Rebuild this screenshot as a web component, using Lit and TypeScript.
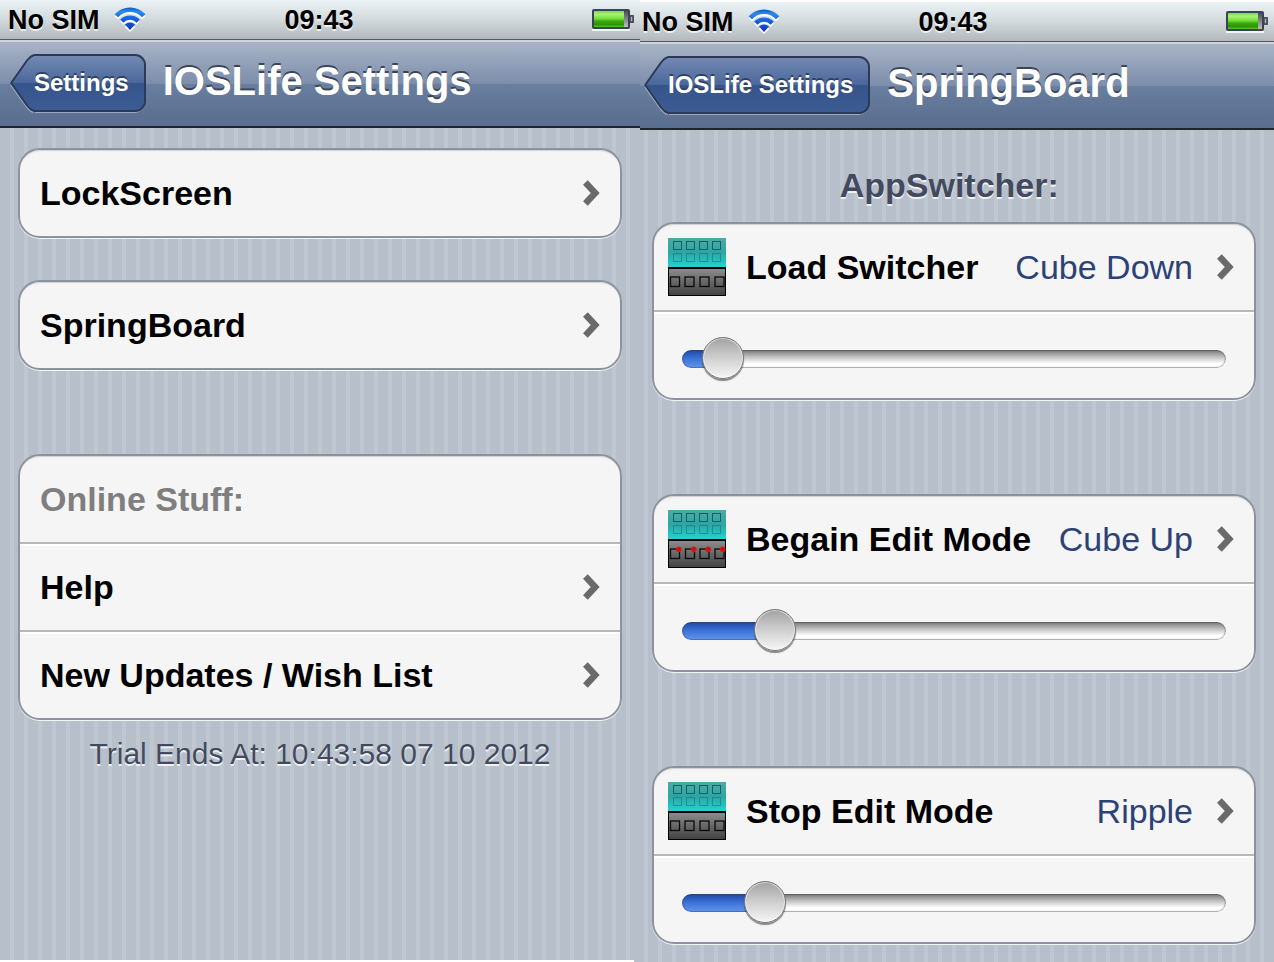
import { LitElement, html, css, svg, nothing } from "lit";
import { customElement, property, state } from "lit/decorators.js";

const chevron = html`<svg class="chevron" width="17" height="26" viewBox="0 0 17 26" aria-hidden="true">
  <path d="M2.400 2.600 L12.200 13 L2.400 23.400" fill="none" stroke="#6a6a6a" stroke-width="6.500" />
</svg>`;

@customElement("status-bar")
export class StatusBar extends LitElement {
  static styles = css`
    :host {
      display: grid;
      grid-template-columns: 1fr auto 1fr;
      align-items: center;
      height: 40px;
      box-sizing: border-box;
      padding: 0 6px 0 8px;
      border-bottom: 1px solid #555b60;
      background: linear-gradient(#ecf3f5, #d3dadd 50%, #b1b9bc);
      font-size: 27px;
      font-weight: bold;
      line-height: 38px;
      color: #000;
      text-shadow: 0 2px 0 rgba(255, 255, 255, 0.7);
    }
    .carrier {
      display: flex;
      align-items: center;
      gap: 14px;
    }
    .clock {
      padding-right: 4px;
    }
    .battery {
      justify-self: end;
    }
    svg {
      display: block;
    }
  `;

  render() {
    const arcs = svg`<path d="M2.300 8.800 A18.500 18.500 0 0 1 29.700 8.800" fill="none" stroke-width="4.600" />
      <path d="M7.800 14.100 A11.500 11.500 0 0 1 24.200 14.100" fill="none" stroke-width="4.400" />`;
    return html`
      <span class="carrier">
        No SIM
        <svg width="32" height="25" viewBox="0 0 32 25" role="img" aria-label="Wi-Fi">
          <defs>
            <linearGradient id="wave" x1="0" y1="0" x2="0" y2="24" gradientUnits="userSpaceOnUse">
              <stop offset="0" stop-color="#0f55bc" />
              <stop offset="0.2" stop-color="#2b8bf0" />
              <stop offset="0.45" stop-color="#1766e2" />
              <stop offset="1" stop-color="#0a2fb8" />
            </linearGradient>
          </defs>
          <g stroke="#fff" fill="#fff" transform="translate(0 2)">
            ${arcs}
            <path d="M10.800 18 Q16 13.500 21.200 18 L16 23 Z" stroke="none" />
          </g>
          <g stroke="url(#wave)">
            ${arcs}
            <path d="M11 17.600 Q16 13.200 21 17.600 L16 23 Z" fill="url(#wave)" stroke="none" />
          </g>
        </svg>
      </span>
      <time class="clock">09:43</time>
      <svg class="battery" width="42" height="22" viewBox="0 0 42 22" role="img" aria-label="Battery">
        <defs>
          <linearGradient id="charge" x1="0" y1="0" x2="0" y2="1">
            <stop offset="0" stop-color="#7ed44c" />
            <stop offset="0.2" stop-color="#a8f574" />
            <stop offset="0.48" stop-color="#74dc3a" />
            <stop offset="0.65" stop-color="#37a80e" />
            <stop offset="0.85" stop-color="#2b9405" />
            <stop offset="1" stop-color="#59c52c" />
          </linearGradient>
          <linearGradient id="empty" x1="0" y1="0" x2="0" y2="1">
            <stop offset="0" stop-color="#43454d" />
            <stop offset="1" stop-color="#c3c6ca" />
          </linearGradient>
        </defs>
        <rect x="0" y="20" width="38" height="2" fill="#fff" opacity="0.8" />
        <rect x="1" y="1" width="36" height="18" rx="1" fill="url(#empty)" stroke="#3c4350" stroke-width="2" />
        <rect x="2" y="2" width="30" height="16" fill="url(#charge)" />
        <rect x="37.900" y="6.900" width="3.200" height="6.200" fill="#aeb3ba" stroke="#3c4350" stroke-width="1.600" />
      </svg>
    `;
  }
}

@customElement("nav-bar")
export class NavBar extends LitElement {
  @property() back = "";
  @property() heading = "";

  static styles = css`
    :host {
      display: flex;
      align-items: center;
      gap: 17px;
      height: 88px;
      box-sizing: border-box;
      padding: 0 10px 2px;
      border-top: 2px solid #ced4dc;
      border-bottom: 2px solid #20242c;
      background: linear-gradient(#a9b4c6, #7c8dab 50%, #697f9f 50%, #596d8f);
      color: #fff;
    }
    .back {
      display: flex;
      padding: 0;
      border: 0;
      background: none;
      font: bold 24px/54px "Liberation Sans", Arial, sans-serif;
      color: inherit;
      text-shadow: 0 -2px 0 #2f4264;
      white-space: nowrap;
      cursor: pointer;
    }
    .tip {
      display: block;
      overflow: visible;
    }
    .label {
      box-sizing: border-box;
      height: 58px;
      padding-right: 15px;
      border: 2px solid #2a3a58;
      border-left: 0;
      border-radius: 0 11px 11px 0;
      background: linear-gradient(#7389b2, #4a679b 50%, #36558c 50%, #3b5b92) padding-box;
      box-shadow: 0 2px 0 -1px rgba(255, 255, 255, 0.4);
    }
    .title {
      margin: 0;
      padding-bottom: 4px;
      font-size: 40px;
      line-height: 48px;
      text-shadow: 0 -2px 0 #3a4558;
      white-space: nowrap;
    }
  `;

  render() {
    return html`
      <button class="back" type="button">
        <svg class="tip" width="24" height="58" viewBox="0 0 24 58" aria-hidden="true">
          <defs>
            <linearGradient id="face" x1="0" y1="2" x2="0" y2="56" gradientUnits="userSpaceOnUse">
              <stop offset="0" stop-color="#7389b2" />
              <stop offset="0.5" stop-color="#4a679b" />
              <stop offset="0.5" stop-color="#36558c" />
              <stop offset="1" stop-color="#3b5b92" />
            </linearGradient>
          </defs>
          <path d="M1 31 L15.500 51.500 Q20 58 24 58.300" fill="none" stroke="#fff" stroke-opacity="0.35" stroke-width="1.500" />
          <path
            d="M24 1 Q20.500 2 17 6.500 L1.200 29 L17 51.500 Q20.500 56 24 57"
            fill="url(#face)"
            stroke="#2a3a58"
            stroke-width="2"
            stroke-linejoin="round"
          />
        </svg>
        <span class="label">${this.back}</span>
      </button>
      <h1 class="title">${this.heading}</h1>
    `;
  }
}

@customElement("transition-icon")
export class TransitionIcon extends LitElement {
  @property({ type: Boolean }) badges = false;

  static styles = css`
    :host {
      display: block;
      flex: none;
    }
    svg {
      display: block;
    }
  `;

  render() {
    const top = [5.5, 18.5, 31.5, 44.5];
    const dock = this.badges ? [2.5, 17.5, 32, 47] : [2.5, 17, 32, 47];
    return html`<svg width="58" height="58" viewBox="0 0 58 58" aria-hidden="true">
      <defs>
        <linearGradient id="sky" x1="0" y1="0" x2="0" y2="1">
          <stop offset="0" stop-color="#4fa9a5" />
          <stop offset="0.5" stop-color="#2ba6a3" />
          <stop offset="1" stop-color="#1fd6d8" />
        </linearGradient>
        <linearGradient id="shelf" x1="0" y1="0" x2="0" y2="1">
          <stop offset="0" stop-color="#8c8c8c" />
          <stop offset="1" stop-color="#424242" />
        </linearGradient>
      </defs>
      <rect width="58" height="30" fill="url(#sky)" />
      <g fill="none" stroke="#0d6361">
        ${top.map((x) => svg`<rect x=${x} y="3.5" width="8" height="8" />`)}
        ${top.map((x) => svg`<rect x=${x} y="15.500" width="8" height="8" stroke-opacity="0.45" />`)}
      </g>
      <rect y="29" width="58" height="29" fill="#000" />
      <rect x="1" y="31" width="56" height="26" fill="url(#shelf)" />
      <g fill="none" stroke="#0a0a0a" stroke-width="1.300">
        ${dock.map((x) => svg`<rect x=${x} y="39" width="9" height="9.500" />`)}
      </g>
      ${this.badges
        ? svg`<g fill="#e01212">
            ${dock.map((x) => svg`<circle cx=${Math.min(x + 8.2, 54.6)} cy="39.200" r="2.800" />
              <rect x=${Math.min(x + 7.2, 53.6)} y="38.700" width="2" height="1" fill="#8d1010" />`)}
          </g>`
        : nothing}
    </svg>`;
  }
}

const cellStyles = css`
  .card {
    display: flex;
    flex-direction: column;
    border: 2px solid #8c939c;
    border-radius: 22px;
    background: #f5f5f5;
    box-shadow: 0 1px 0 #f1f4f7, inset 0 2px 1px -1px #cfd1d4;
    overflow: hidden;
  }
  .row {
    display: flex;
    align-items: center;
    gap: 20px;
    height: 86px;
    box-sizing: border-box;
    padding: 0 20px;
    font-size: 34px;
    font-weight: bold;
    line-height: 40px;
    color: #000;
    text-decoration: none;
    white-space: nowrap;
  }
  .row + .row {
    border-top: 2px solid #b8b8b8;
    height: 88px;
    box-shadow: inset 0 2px 0 #fff;
  }
  .text {
    flex: 1;
  }
  .muted {
    color: #7f7f7f;
  }
  .chevron {
    display: block;
    flex: none;
  }
`;

@customElement("effect-card")
export class EffectCard extends LitElement {
  @property() name = "";
  @property() effect = "";
  @property({ type: Number }) level = 0;
  @property({ type: Boolean }) badges = false;

  static styles = [
    cellStyles,
    css`
      :host {
        display: block;
      }
      .choice {
        padding-left: 14px;
      }
      .value {
        font-weight: normal;
        color: #2c4277;
        padding-right: 4px;
      }
      .speed {
        padding: 8px 28px 0;
      }
      .slider {
        -webkit-appearance: none;
        appearance: none;
        display: block;
        width: 100%;
        height: 18px;
        margin: 0;
        border-radius: 9px;
        background: linear-gradient(#2146a0, #3a6fd6 45%, #6299f2) no-repeat,
          linear-gradient(#787878, #c4c4c4 40%, #fff 75%, #fff);
        box-shadow: inset 0 0 1px 1px rgba(60, 60, 60, 0.45);
        cursor: pointer;
      }
      .slider::-webkit-slider-thumb {
        -webkit-appearance: none;
        width: 42px;
        height: 42px;
        margin-top: -3px;
        border: 1px solid #777;
        border-radius: 50%;
        background: linear-gradient(#a2a2a2, #cfcfcf 50%, #f6f6f6);
        box-shadow: 0 2px 1px rgba(0, 0, 0, 0.45), inset 0 0 0 1px rgba(255, 255, 255, 0.55);
      }
    `,
  ];

  private onInput(e: Event) {
    this.level = Number((e.target as HTMLInputElement).value);
  }

  render() {
    return html`<div class="card">
      <a class="row choice" href="#">
        <transition-icon ?badges=${this.badges}></transition-icon>
        <span class="text">${this.name}</span>
        <span class="value">${this.effect}</span>
        ${chevron}
      </a>
      <div class="row speed">
        <input
          class="slider"
          type="range"
          min="0"
          max="100"
          step="any"
          aria-label=${this.name}
          .value=${String(this.level)}
          style="background-size: ${this.level + 2}% 100%, 100% 100%"
          @input=${this.onInput}
        />
      </div>
    </div>`;
  }
}

@customElement("app-root")
export class AppRoot extends LitElement {
  @state() private effects = [
    { name: "Load Switcher", effect: "Cube Down", level: 4, badges: false },
    { name: "Begain Edit Mode", effect: "Cube Up", level: 14.4, badges: true },
    { name: "Stop Edit Mode", effect: "Ripple", level: 12.4, badges: false },
  ];

  static styles = [
    cellStyles,
    css`
      :host {
        display: flex;
        align-items: flex-start;
        min-height: 100vh;
        background: #fff;
        font-family: "Liberation Sans", Arial, sans-serif;
      }
      .screen {
        flex: 1 1 0;
        min-width: 0;
        min-height: calc(100vh - 2px);
        background: repeating-linear-gradient(90deg, #b7bfca 0 10px, #bfc7d0 10px 14px);
      }
      .general {
        position: relative;
        z-index: 1;
        margin-right: -6px;
      }
      .springboard {
        margin-top: 2px;
      }
      .content {
        display: flex;
        flex-direction: column;
        padding: 20px 18px 0;
      }
      .links {
        gap: 42px;
      }
      .online {
        margin-top: 42px;
      }
      .note {
        margin: -26px 0 0;
        font-size: 30px;
        line-height: 36px;
        text-align: center;
        color: #434a60;
        text-shadow: 0 2px 0 rgba(255, 255, 255, 0.8);
      }
      .section {
        margin: 15px 0 17px;
        font-size: 34px;
        line-height: 40px;
        text-align: center;
        white-space: pre;
        color: #434a60;
        text-shadow: 0 2px 0 rgba(255, 255, 255, 0.8);
      }
      .effects {
        display: flex;
        flex-direction: column;
        gap: 94px;
      }
    `,
  ];

  render() {
    return html`
      <section class="screen general">
        <status-bar></status-bar>
        <nav-bar back="Settings" heading="IOSLife Settings"></nav-bar>
        <div class="content links">
          <div class="card"><a class="row" href="#"><span class="text">LockScreen</span>${chevron}</a></div>
          <div class="card"><a class="row" href="#"><span class="text">SpringBoard</span>${chevron}</a></div>
          <div class="card online">
            <div class="row muted">Online Stuff:</div>
            <a class="row" href="#"><span class="text">Help</span>${chevron}</a>
            <a class="row" href="#"><span class="text">New Updates / Wish List</span>${chevron}</a>
          </div>
          <p class="note">Trial Ends At: 10:43:58 07 10 2012</p>
        </div>
      </section>
      <section class="screen springboard">
        <status-bar></status-bar>
        <nav-bar back="IOSLife Settings" heading="SpringBoard"></nav-bar>
        <div class="content">
          <h2 class="section">${"AppSwitcher: "}</h2>
          <div class="effects">
            ${this.effects.map(
              (e) => html`<effect-card
                .name=${e.name}
                .effect=${e.effect}
                .level=${e.level}
                .badges=${e.badges}
              ></effect-card>`
            )}
          </div>
        </div>
      </section>
    `;
  }
}
